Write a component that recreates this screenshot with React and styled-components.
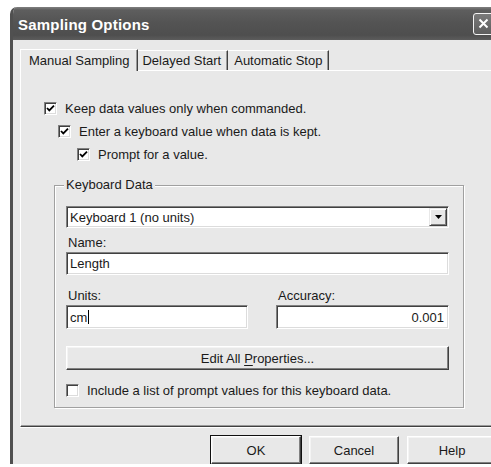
import styled, { createGlobalStyle } from "styled-components";

const GlobalStyle = createGlobalStyle`
  html, body {
    margin: 0;
    padding: 0;
    background: #ffffff;
    overflow: hidden;
  }
  body {
    font-family: "Liberation Sans", Arial, sans-serif;
    font-size: 13px;
    color: #1a1a1a;
  }
`;

const Page = styled.div`
  padding: 7px 0 0 10px;
  width: 491px;
  height: 467px;
  box-sizing: border-box;
`;

const Dialog = styled.div`
  width: 490px;
  background: #e8e8e8;
  border-left: 3px solid #505050;
  border-radius: 7px 7px 0 0;
  overflow: hidden;
`;

const TitleBar = styled.div`
  height: 33px;
  margin-left: -3px;
  padding: 2px 9px 0 8px;
  box-sizing: border-box;
  display: flex;
  align-items: center;
  justify-content: space-between;
  background: linear-gradient(#808080 0, #5e5e5e 3px, #545454 45%, #4e4e4e 85%, #5c5c5c 100%);
`;

const Title = styled.span`
  color: #fff;
  font-weight: bold;
  font-size: 15px;
  letter-spacing: 0.2px;
`;

const CloseButton = styled.div`
  width: 21px;
  height: 22px;
  margin-top: -2px;
  box-sizing: border-box;
  border: 1px solid #f4f4f4;
  border-radius: 3px;
  background: linear-gradient(#7a7a7a, #5e5e5e);
  display: flex;
  align-items: center;
  justify-content: center;
`;

const Body = styled.div`
  padding: 8px 0 0 7px;
`;

const TabStrip = styled.div`
  display: flex;
  align-items: flex-end;
  height: 22px;
  padding-left: 2px;
`;

const Tab = styled.div`
  position: relative;
  height: ${(p) => (p.$active ? "22px" : "20px")};
  margin: ${(p) => (p.$active ? "0 -2px -1px -2px" : "0")};
  padding: 0 ${(p) => (p.$active ? "8px" : "6px")};
  box-sizing: border-box;
  display: flex;
  align-items: center;
  background: #e8e8e8;
  border-top: 1px solid #fff;
  border-left: ${(p) => (p.$first || p.$active ? "1px solid #fff" : "none")};
  border-right: 1px solid #404040;
  box-shadow: inset -1px 0 #9a9a9a;
  z-index: ${(p) => (p.$active ? 2 : 1)};
`;

const Panel = styled.div`
  position: relative;
  height: 357px;
  box-sizing: border-box;
  border-top: 1px solid #fff;
  border-left: 1px solid #fff;
  border-bottom: 1px solid #404040;
  box-shadow: 0 1px 0 #fff;
  padding: 29px 0 0 23px;
`;

const PanelBottom = styled.div`
  position: absolute;
  left: 0;
  right: 0;
  bottom: 0;
  height: 1px;
  background: #9a9a9a;
`;

const Options = styled.div`
  display: flex;
  flex-direction: column;
  gap: 6px;
`;

const CheckRow = styled.label`
  display: flex;
  align-items: center;
  height: 17px;
  gap: 8px;
  padding-left: ${(p) => p.$indent || 0}px;
  margin-top: ${(p) => p.$top || 0}px;
`;

const Box = styled.span`
  width: 13px;
  height: 13px;
  box-sizing: border-box;
  background: #fff;
  border: 1px solid;
  border-color: #808080 #ffffff #ffffff #808080;
  box-shadow: inset 1px 1px #404040, inset -1px -1px #dcdcdc;
  display: flex;
  align-items: center;
  justify-content: center;
  flex: none;
`;

const Group = styled.div`
  position: relative;
  margin: 22px 0 0 10px;
  width: 410px;
  box-sizing: border-box;
  border: 1px solid #a0a0a0;
  box-shadow: inset 1px 1px #fff, 1px 1px #fff;
  padding: 20px 14px 8px 11px;
  display: flex;
  flex-direction: column;
`;

const GroupCaption = styled.span`
  position: absolute;
  top: -9px;
  left: 9px;
  padding: 0 2px;
  background: #e8e8e8;
  line-height: 16px;
`;

const Sunken = styled.div`
  height: ${(p) => p.$h || 23}px;
  box-sizing: border-box;
  background: #fff;
  border: 1px solid;
  border-color: #808080 #ffffff #ffffff #808080;
  box-shadow: inset 1px 1px #404040, inset -1px -1px #dcdcdc;
  display: flex;
  align-items: center;
  justify-content: ${(p) => (p.$right ? "flex-end" : "flex-start")};
  padding: 0 ${(p) => (p.$right ? "4px" : "2px")} 0 3px;
`;

const ComboText = styled.span`
  flex: 1;
`;

const ComboArrow = styled.div`
  width: 18px;
  height: 18px;
  margin-right: -1px;
  box-sizing: border-box;
  background: #e8e8e8;
  border: 1px solid;
  border-color: #e8e8e8 #404040 #404040 #e8e8e8;
  box-shadow: inset 1px 1px #fff, inset -1px -1px #808080;
  display: flex;
  align-items: center;
  justify-content: center;
`;

const FieldLabel = styled.div`
  padding-left: 2px;
  line-height: 15px;
  margin: ${(p) => p.$top || 7}px 0 2px;
`;

const FieldGrid = styled.div`
  display: grid;
  grid-template-columns: 182px 1fr;
  column-gap: 28px;
`;

const Caret = styled.span`
  display: inline-block;
  width: 1px;
  height: 14px;
  background: #000;
  vertical-align: middle;
  margin-left: 1px;
`;

const Button = styled.div`
  height: ${(p) => p.$h || 24}px;
  width: ${(p) => (p.$w ? `${p.$w}px` : "auto")};
  box-sizing: border-box;
  background: #e8e8e8;
  border: 1px solid;
  border-color: #ffffff #404040 #404040 #ffffff;
  box-shadow: inset -1px -1px #808080, inset 1px 1px #f4f4f4
    ${(p) => (p.$default ? ", 0 0 0 1px #111" : "")};
  display: flex;
  align-items: center;
  justify-content: center;
  flex: none;
  margin-top: ${(p) => p.$top || 0}px;

  u {
    text-decoration: underline;
    text-underline-offset: 2px;
  }
`;

const Footer = styled.div`
  display: flex;
  justify-content: flex-end;
  gap: 8px;
  padding: 9px 6px 0 0;
`;

const Check = () => (
  <svg width="9" height="9" viewBox="0 0 9 9">
    <path d="M1 4 L3.3 6.4 L8 1.6" fill="none" stroke="#000" strokeWidth="1.8" />
  </svg>
);

const CheckBox = ({ checked, indent, top, children }) => (
  <CheckRow $indent={indent} $top={top}>
    <Box>{checked && <Check />}</Box>
    <span>{children}</span>
  </CheckRow>
);

const App = () => {
  return (
    <>
      <GlobalStyle />
      <Page>
        <Dialog>
          <TitleBar>
            <Title>Sampling Options</Title>
            <CloseButton>
              <svg width="11" height="11" viewBox="0 0 11 11">
                <path d="M1.5 1.5 L9.5 9.5 M9.5 1.5 L1.5 9.5" stroke="#fff" strokeWidth="2" />
              </svg>
            </CloseButton>
          </TitleBar>
          <Body>
            <TabStrip>
              <Tab $active $first>Manual Sampling</Tab>
              <Tab>Delayed Start</Tab>
              <Tab>Automatic Stop</Tab>
            </TabStrip>
            <Panel>
              <Options>
                <CheckBox checked>Keep data values only when commanded.</CheckBox>
                <CheckBox checked indent={14}>Enter a keyboard value when data is kept.</CheckBox>
                <CheckBox checked indent={33}>Prompt for a value.</CheckBox>
              </Options>

              <Group>
                <GroupCaption>Keyboard Data</GroupCaption>
                <Sunken $h={22}>
                  <ComboText>Keyboard 1 (no units)</ComboText>
                  <ComboArrow>
                    <svg width="7" height="4" viewBox="0 0 7 4">
                      <path d="M0 0 H7 L3.5 4 Z" fill="#000" />
                    </svg>
                  </ComboArrow>
                </Sunken>

                <FieldLabel>Name:</FieldLabel>
                <Sunken>Length</Sunken>

                <FieldGrid>
                  <div>
                    <FieldLabel $top={13}>Units:</FieldLabel>
                    <Sunken $h={24}>
                      cm<Caret />
                    </Sunken>
                  </div>
                  <div>
                    <FieldLabel $top={13}>Accuracy:</FieldLabel>
                    <Sunken $h={24} $right>0.001</Sunken>
                  </div>
                </FieldGrid>

                <Button $top={17}>
                  Edit All&nbsp;<u>P</u>roperties...
                </Button>

                <CheckBox top={12}>Include a list of prompt values for this keyboard data.</CheckBox>
              </Group>
              <PanelBottom />
            </Panel>
            <Footer>
              <Button $w={90} $h={28} $default>OK</Button>
              <Button $w={90} $h={28}>Cancel</Button>
              <Button $w={90} $h={28}>Help</Button>
            </Footer>
          </Body>
        </Dialog>
      </Page>
    </>
  );
};

export default App;
